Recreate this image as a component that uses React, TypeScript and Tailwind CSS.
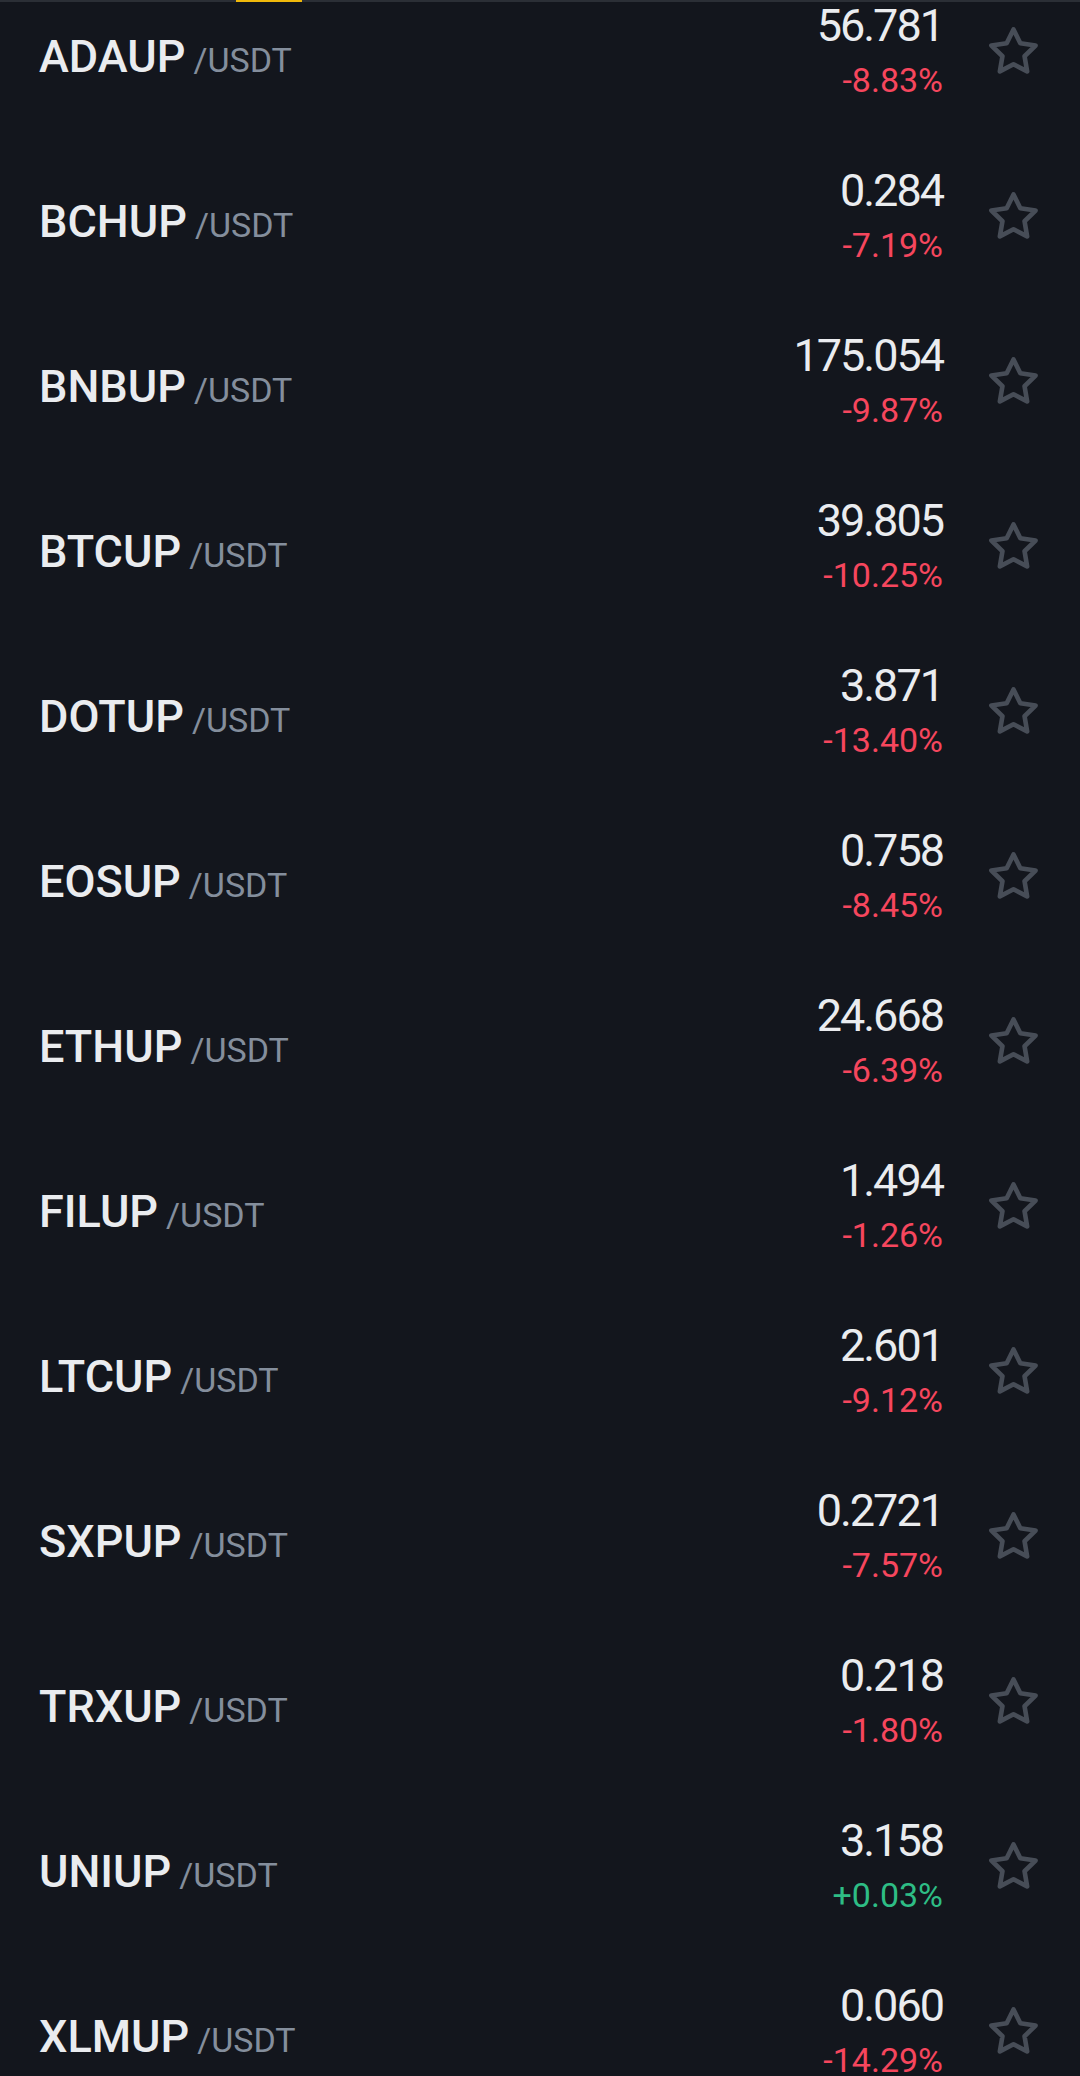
import React from 'react';

interface Pair {
  base: string;
  price: string;
  change: string;
}

const pairs: Pair[] = [
  { base: 'ADAUP', price: '56.781', change: '-8.83%' },
  { base: 'BCHUP', price: '0.284', change: '-7.19%' },
  { base: 'BNBUP', price: '175.054', change: '-9.87%' },
  { base: 'BTCUP', price: '39.805', change: '-10.25%' },
  { base: 'DOTUP', price: '3.871', change: '-13.40%' },
  { base: 'EOSUP', price: '0.758', change: '-8.45%' },
  { base: 'ETHUP', price: '24.668', change: '-6.39%' },
  { base: 'FILUP', price: '1.494', change: '-1.26%' },
  { base: 'LTCUP', price: '2.601', change: '-9.12%' },
  { base: 'SXPUP', price: '0.2721', change: '-7.57%' },
  { base: 'TRXUP', price: '0.218', change: '-1.80%' },
  { base: 'UNIUP', price: '3.158', change: '+0.03%' },
  { base: 'XLMUP', price: '0.060', change: '-14.29%' },
];

function StarIcon() {
  return (
    <svg
      viewBox="0 0 24 24"
      className="w-[53px] h-[53px] flex-shrink-0 mb-[2px]"
      fill="none"
      stroke="#474d57"
      strokeWidth={2.1}
      strokeLinejoin="round"
      strokeLinecap="round"
    >
      <polygon points="12,2 15.09,8.26 22,9.27 17,14.14 18.18,21.02 12,17.77 5.82,21.02 7,14.14 2,9.27 8.91,8.26" />
    </svg>
  );
}

function PairRow({ pair }: { pair: Pair }) {
  const isUp = pair.change.startsWith('+');
  return (
    <div className="flex items-center h-[165px] pl-[39px] pr-[40px]">
      {/* Symbol */}
      <div className="flex items-baseline mt-[8px]">
        <span className="text-[45px] leading-[52px] font-medium text-[#eaecef]">
          {pair.base}
        </span>
        <span className="ml-[8px] text-[34px] leading-[40px] text-[#848e9c]">/USDT</span>
      </div>

      <div className="flex-1" />

      {/* Price + change */}
      <div className="flex flex-col items-end">
        <span className="text-[45px] leading-[55px] tracking-[-2px] text-[#eaecef]">
          {pair.price}
        </span>
        <span
          className={`text-[34px] leading-[55px] ${
            isUp ? 'text-[#2ebd85]' : 'text-[#f6465d]'
          }`}
        >
          {pair.change}
        </span>
      </div>

      <div className="ml-[44px]">
        <StarIcon />
      </div>
    </div>
  );
}

export default function App() {
  return (
    <div className="h-[2076px] w-[1080px] overflow-hidden flex flex-col bg-[#13161d] font-['Roboto','Noto_Sans',sans-serif]">
      {/* Tab bar bottom edge */}
      <div className="h-[2px] flex-shrink-0 bg-[#2b2f36] flex">
        <div className="ml-[236px] w-[66px] h-full bg-[#f0b90b]" />
      </div>

      {/* Scrolled list */}
      <div className="flex-1 overflow-hidden">
        <div className="-mt-[32px]">
          {pairs.map((p) => (
            <PairRow key={p.base} pair={p} />
          ))}
        </div>
      </div>
    </div>
  );
}
